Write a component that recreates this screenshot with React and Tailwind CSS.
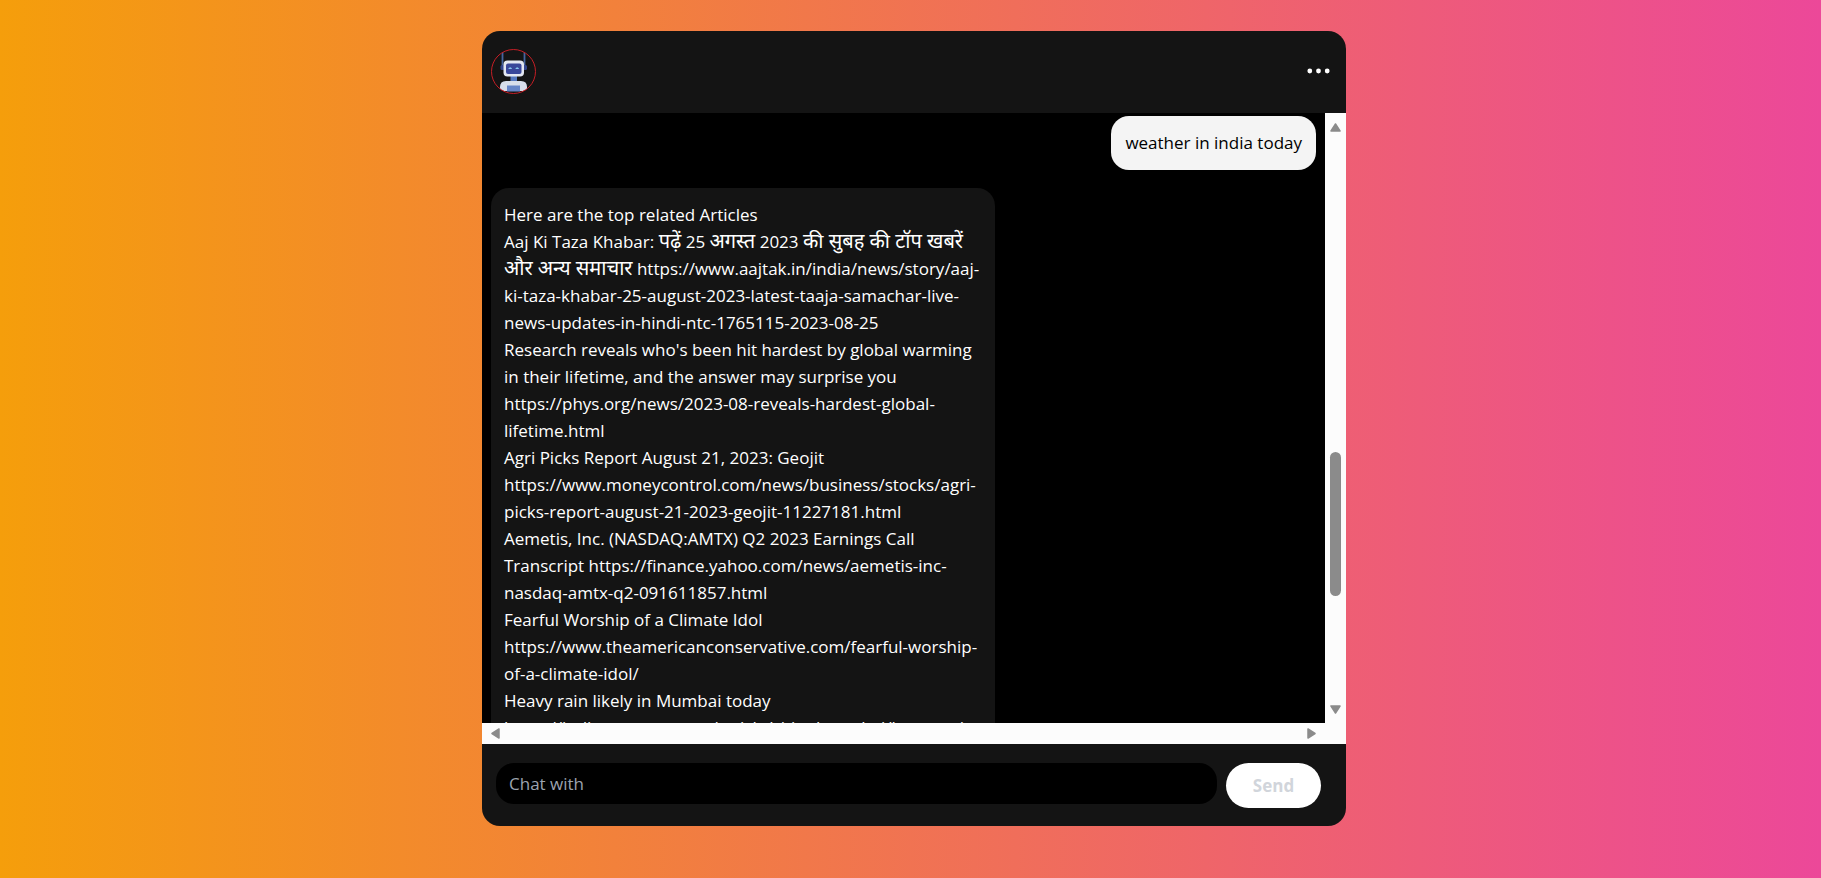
import { useState } from 'react';

const articles = [
  { title: 'Aaj Ki Taza Khabar: पढ़ें 25 अगस्त 2023 की सुबह की टॉप खबरें और अन्य समाचार', url: 'https://www.aajtak.in/india/news/story/aaj-ki-taza-khabar-25-august-2023-latest-taaja-samachar-live-news-updates-in-hindi-ntc-1765115-2023-08-25' },
  { title: "Research reveals who's been hit hardest by global warming in their lifetime, and the answer may surprise you", url: 'https://phys.org/news/2023-08-reveals-hardest-global-lifetime.html' },
  { title: 'Agri Picks Report August 21, 2023: Geojit', url: 'https://www.moneycontrol.com/news/business/stocks/agri-picks-report-august-21-2023-geojit-11227181.html' },
  { title: 'Aemetis, Inc. (NASDAQ:AMTX) Q2 2023 Earnings Call Transcript', url: 'https://finance.yahoo.com/news/aemetis-inc-nasdaq-amtx-q2-091611857.html' },
  { title: 'Fearful Worship of a Climate Idol', url: 'https://www.theamericanconservative.com/fearful-worship-of-a-climate-idol/' },
  { title: 'Heavy rain likely in Mumbai today', url: 'https://indianexpress.com/article/cities/mumbai/heavy-rain-likely-in-mumbai-today/' },
];

// Devanagari runs are set slightly larger than the Latin text around them.
function MixedText({ text }) {
  return text.split(/([\u0900-\u097F]+(?:\s+[\u0900-\u097F]+)*)/).map((part, i) =>
    i % 2 ? <span key={i} lang="hi" className="text-[20px] leading-none">{part}</span> : part
  );
}

function RobotAvatar() {
  return (
    <svg viewBox="0 0 45 45" className="size-[45px]" role="img" aria-label="Bot">
      <defs>
        <clipPath id="avatar-clip">
          <circle cx="22.5" cy="22.5" r="22" />
        </clipPath>
      </defs>
      <g clipPath="url(#avatar-clip)">
        <path d="M11.5 3v14M33.5 3v14" stroke="#45659f" strokeWidth="1.8" />
        <rect x="9.5" y="16" width="4" height="5" rx="1.5" fill="#33458c" />
        <rect x="32" y="16" width="4" height="5" rx="1.5" fill="#33458c" />
        <rect x="19.5" y="26" width="6.5" height="7" fill="#5577bd" />
        <rect x="12.5" y="11.5" width="20.5" height="16" rx="4" fill="#e3e7f1" />
        <rect x="15" y="14.5" width="15.500" height="10.5" rx="2" fill="#39479a" />
        <path d="M17.200 20q2-3.400 4 0zM24.200 20q2-3.400 4 0z" fill="#86c5ee" />
        <path d="M9 42v-4q0-6 6-6h15q6 0 6 6v4z" fill="#d8deea" />
        <rect x="16" y="36.500" width="13" height="6" fill="#6685c7" />
      </g>
      <circle cx="22.5" cy="22.5" r="22" fill="none" stroke="#c51f26" />
    </svg>
  );
}

function Arrow({ points, vertical }) {
  return (
    <svg viewBox={vertical ? '0 0 11 9' : '0 0 9 11'} className={vertical ? 'h-[9px] w-[11px]' : 'h-[11px] w-[9px]'} aria-hidden="true">
      <polygon points={points} fill="#8b8b8b" stroke="#8b8b8b" strokeWidth="1.5" strokeLinejoin="round" />
    </svg>
  );
}

export default function App() {
  const [message, setMessage] = useState('');
  return (
    <div className="flex h-screen justify-center bg-linear-to-r/srgb from-[#f59e0b] to-[#ec4899] pt-[31px] pb-[52px] pl-[7px] font-['Open_Sans','Noto_Sans',sans-serif] text-[17px] leading-[27px]">
      <main className="flex w-full max-w-[864px] flex-col overflow-hidden rounded-[18px] bg-[#141414]">
        <header className="flex h-[82px] shrink-0 items-center justify-between px-[9px] pb-px">
          <RobotAvatar />
          <button type="button" aria-label="More options" className="mr-[5px] flex items-center">
            <svg viewBox="0 0 27 27" className="size-[27px]" fill="#fff" aria-hidden="true">
              <circle cx="4.8" cy="13" r="2.4" />
              <circle cx="13.5" cy="13" r="2.4" />
              <circle cx="22.200" cy="13" r="2.4" />
            </svg>
          </button>
        </header>

        <div className="flex min-h-0 flex-1">
          <section aria-label="Conversation" className="flex min-w-0 flex-1 flex-col gap-[18px] overflow-hidden bg-black px-[9px] pt-[3px]">
            <p className="shrink-0 self-end rounded-[18px] bg-[#f4f4f4] px-[14px] pt-[13px] pb-[14px] text-black">weather in india today</p>
            <div className="w-[504px] max-w-full shrink-0 self-start rounded-[18px] bg-[#141414] px-[13px] pt-[13px] pb-[14px] text-white">
              <p>Here are the top related Articles</p>
              {articles.map((a) => (
                <p key={a.url}><MixedText text={`${a.title} ${a.url}`} /></p>
              ))}
            </div>
          </section>
          <div className="flex w-[21px] shrink-0 flex-col items-center bg-[#fcfcfc] pt-[10px] pb-[9px]">
            <Arrow vertical points="5.5,1 10,8 1,8" />
            <div className="flex w-full flex-1 flex-col items-center">
              <div className="grow-[320]" />
              <div className="h-[144px] w-[11px] rounded-full bg-[#8b8b8b]" />
              <div className="grow-[109]" />
            </div>
            <Arrow vertical points="1,1 10,1 5.5,8" />
          </div>
        </div>

        <div className="flex h-[21px] shrink-0 items-center justify-between bg-[#fcfcfc] pr-[30px] pl-[9px]">
          <Arrow points="8,1 8,10 1,5.5" />
          <Arrow points="1,1 1,10 8,5.5" />
        </div>

        <form onSubmit={(e) => e.preventDefault()} className="flex h-[82px] shrink-0 items-start gap-[9px] pt-[19px] pr-[25px] pl-[14px]">
          <input
            type="text"
            aria-label="Message"
            placeholder="Chat with"
            value={message}
            onChange={(e) => setMessage(e.target.value)}
            className="h-[41px] min-w-0 flex-1 rounded-[18px] bg-black px-[13px] text-white placeholder:text-[#9ca3af]"
          />
          <button type="submit" className="h-[45px] w-[95px] rounded-full bg-white font-bold text-[#d1d5db]">Send</button>
        </form>
      </main>
    </div>
  );
}
